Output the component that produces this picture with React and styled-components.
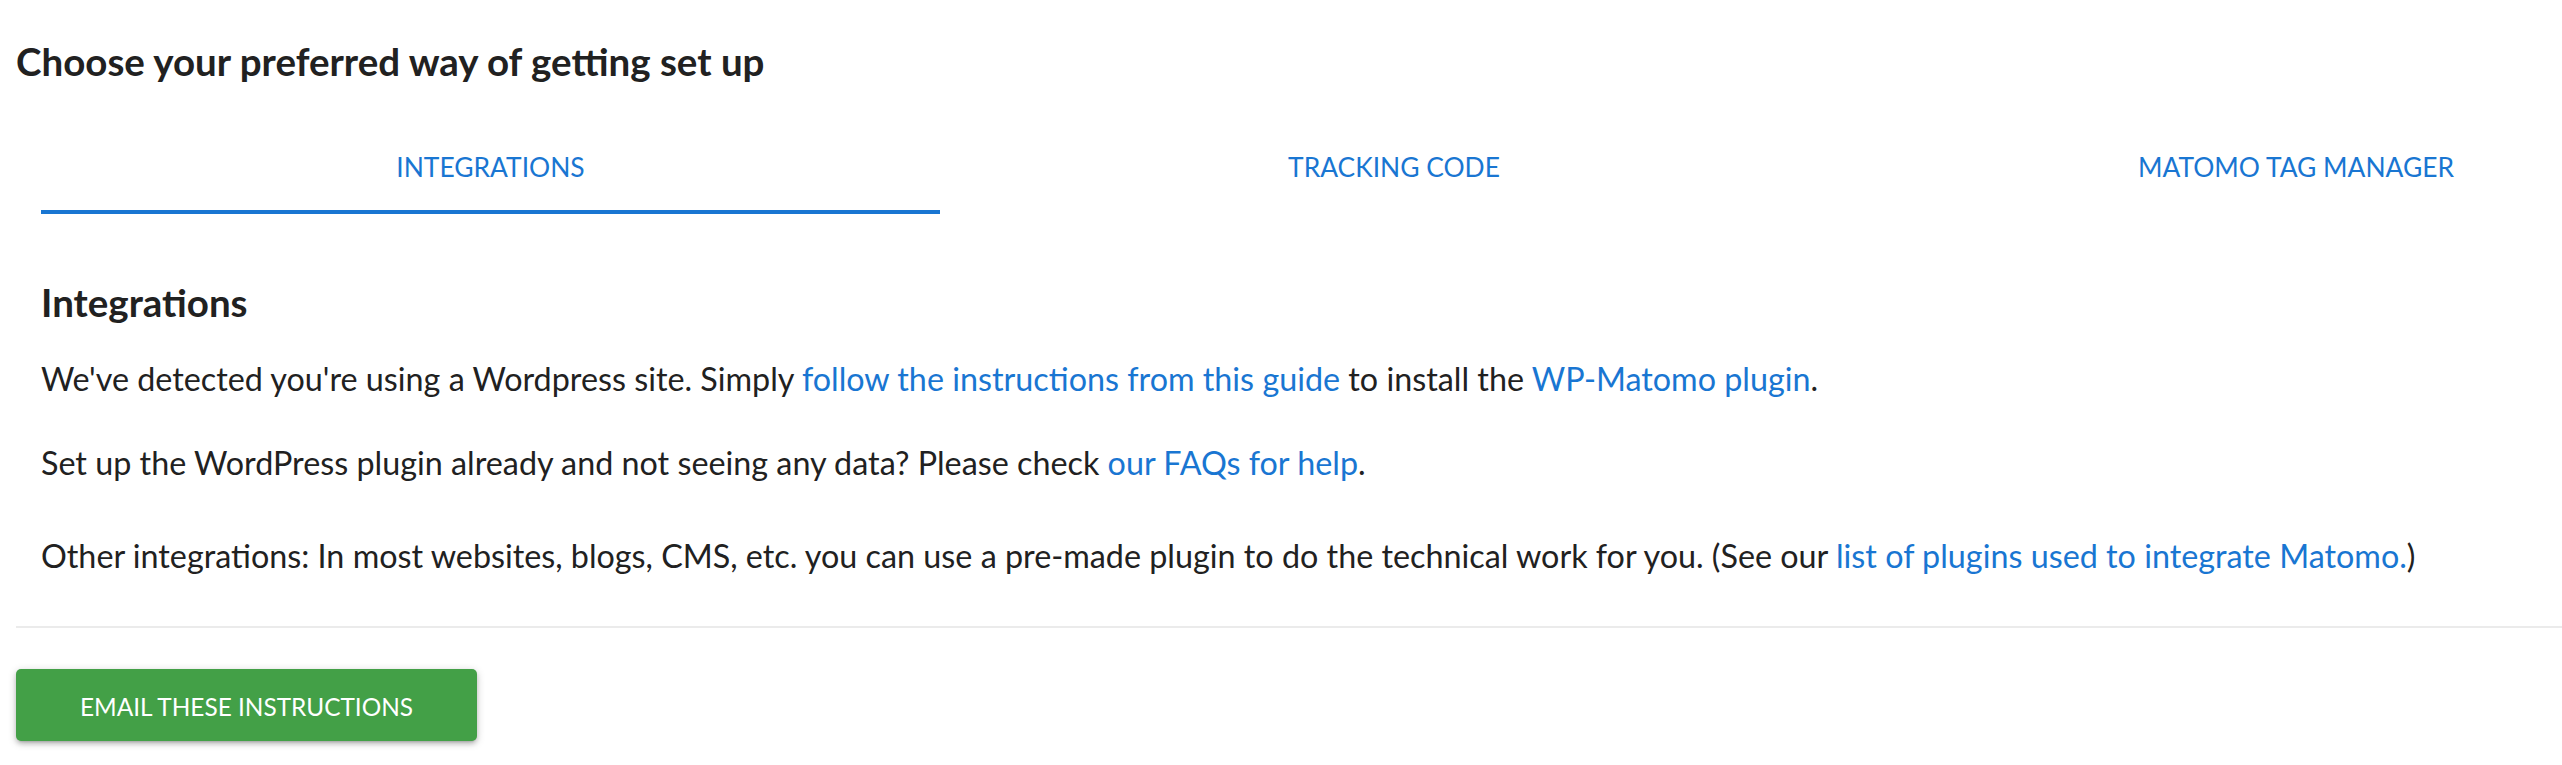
import React from "react";
import styled, { createGlobalStyle } from "styled-components";

const Global = createGlobalStyle`
  html, body { margin: 0; padding: 0; background: #fff; }
  body {
    font-family: Lato, "Liberation Sans", sans-serif;
    color: #212121;
    overflow: hidden;
  }
`;

const Page = styled.div`
  padding: 37px 0 0 16px;
  overflow: hidden;
`;

const Title = styled.h2`
  margin: 0;
  font-size: 38.5px;
  line-height: 48px;
  font-weight: 700;
  color: #212121;
`;

const TabRow = styled.ul`
  list-style: none;
  margin: 49px 0 0 25px;
  padding: 0;
  display: flex;
  white-space: nowrap;
  overflow: hidden;
`;

const Tab = styled.li`
  flex: 0 0 ${(p) => (p.$active ? "899px" : "902px")};
  margin-right: ${(p) => (p.$active ? "3px" : "0")};
  box-sizing: border-box;
  text-align: center;
  padding: 13px 0 23px;
  font-size: 26.4px;
  line-height: 40px;
  color: #1976d2;
  text-transform: uppercase;
  border-bottom: 4px solid ${(p) => (p.$active ? "#1976d2" : "transparent")};
`;

const Panel = styled.div`
  padding: 64px 25px 0;
`;

const SubTitle = styled.h3`
  margin: 0 0 32px;
  font-size: 38.5px;
  line-height: 48px;
  font-weight: 700;
`;

const Para = styled.p`
  margin: 0 0 ${(p) => p.$gap}px;
  font-size: 32.3px;
  line-height: 42px;
`;

const Link = styled.a`
  color: #1976d2;
  text-decoration: none;
`;

const Divider = styled.hr`
  margin: 0;
  border: 0;
  height: 2px;
  background: #ebebeb;
`;

const Footer = styled.div`
  padding: 41px 0 30px;
`;

const Button = styled.button`
  box-sizing: border-box;
  height: 72px;
  width: 461px;
  padding: 3px 0 0;
  border: 0;
  border-radius: 5px;
  background: #43a047;
  color: #fff;
  font-family: Lato, "Liberation Sans", sans-serif;
  font-size: 24.4px;
  line-height: 69px;
  text-transform: uppercase;
  box-shadow: 0 3px 4px 0 rgba(0, 0, 0, 0.14), 0 4px 2px -3px rgba(0, 0, 0, 0.12),
    0 2px 8px 0 rgba(0, 0, 0, 0.2);
  cursor: pointer;
`;

export default function App() {
  return (
    <>
      <Global />
      <Page>
        <Title>Choose your preferred way of getting set up</Title>
        <TabRow>
          <Tab $active>Integrations</Tab>
          <Tab>Tracking Code</Tab>
          <Tab>Matomo Tag Manager</Tab>
        </TabRow>
        <Panel>
          <SubTitle>Integrations</SubTitle>
          <Para $gap={42}>
            We've detected you're using a Wordpress site. Simply{" "}
            <Link href="#">follow the instructions from this guide</Link> to install the{" "}
            <Link href="#">WP-Matomo plugin</Link>.
          </Para>
          <Para $gap={51}>
            Set up the WordPress plugin already and not seeing any data? Please check{" "}
            <Link href="#">our FAQs for help</Link>.
          </Para>
          <Para $gap={49}>
            Other integrations: In most websites, blogs, CMS, etc. you can use a pre-made plugin to do the
            technical work for you. (See our{" "}
            <Link href="#">list of plugins used to integrate Matomo.</Link>)
          </Para>
        </Panel>
        <Divider />
        <Footer>
          <Button>Email these instructions</Button>
        </Footer>
      </Page>
    </>
  );
}
